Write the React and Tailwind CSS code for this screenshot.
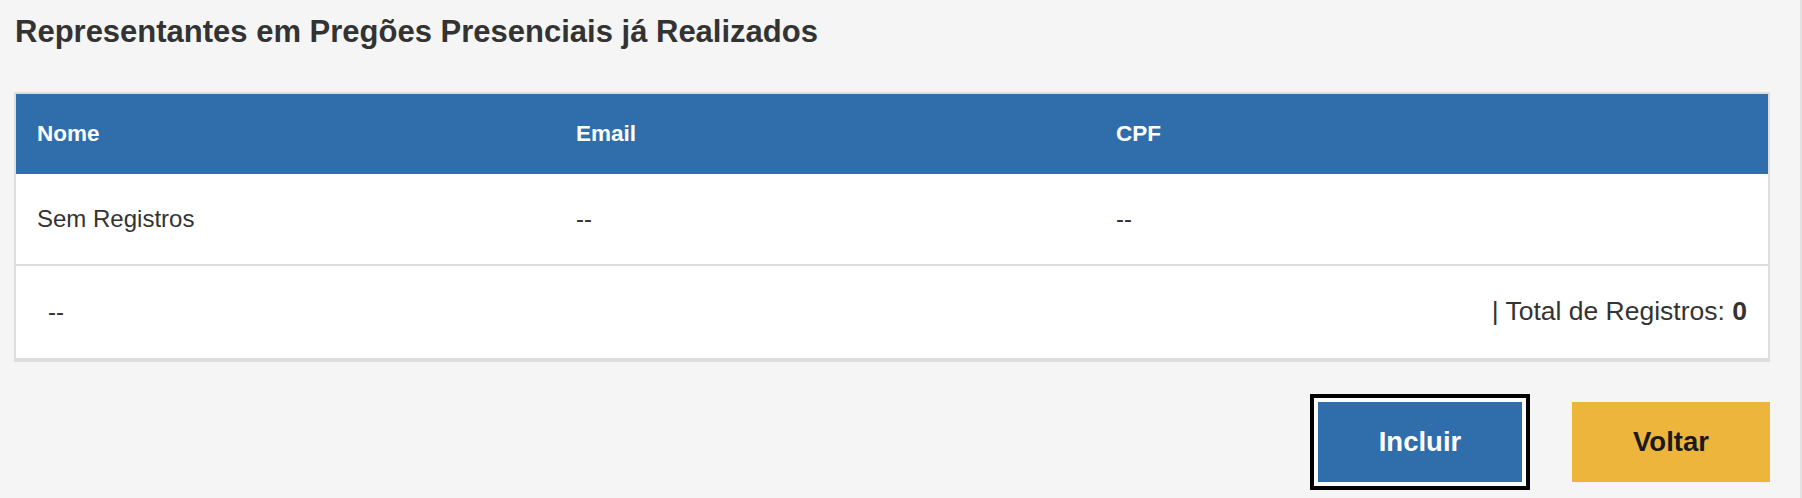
export default function App() {
  return (
    <div
      className="min-h-screen w-full bg-[#f5f5f5] pl-[14px] pr-[30px] pt-[14px] border-r-2 border-[#e2e2e2]"
      style={{ fontFamily: '"Liberation Sans", Arial, sans-serif' }}
    >
      <h1 className="text-[31px] leading-[36px] font-bold text-[#333333] pl-[1px]">
        Representantes em Pregões Presenciais já Realizados
      </h1>

      <div className="mt-[42px] border-2 border-b-4 border-[#dddddd] bg-white">
        <div className="flex h-[80px] items-center bg-[#306eab] text-[22.5px] font-bold text-white">
          <div className="w-[539px] pl-[21px]">Nome</div>
          <div className="w-[540px] pl-[21px]">Email</div>
          <div className="flex-1 pl-[21px]">CPF</div>
        </div>
        <div className="flex h-[92px] items-center border-b-2 border-[#dddddd] text-[24px] text-[#333333]">
          <div className="w-[539px] pl-[21px]">Sem Registros</div>
          <div className="w-[540px] pl-[21px]">--</div>
          <div className="flex-1 pl-[21px]">--</div>
        </div>
        <div className="flex h-[92px] items-center justify-between pl-[32px] pr-[21px] text-[26.5px] text-[#333333]">
          <div className="text-[24px]">--</div>
          <div>
            | Total de Registros: <span className="font-bold">0</span>
          </div>
        </div>
      </div>

      <div className="mt-[40px] flex justify-end gap-[50px]">
        <button className="h-[80px] w-[204px] bg-[#306eab] text-[27.5px] font-bold text-white shadow-[0_0_0_4px_white,0_0_0_8px_black]">
          Incluir
        </button>
        <button className="h-[80px] w-[198px] bg-[#eeb53d] text-[27.5px] font-bold text-[#1a1a1a]">
          Voltar
        </button>
      </div>
    </div>
  );
}
